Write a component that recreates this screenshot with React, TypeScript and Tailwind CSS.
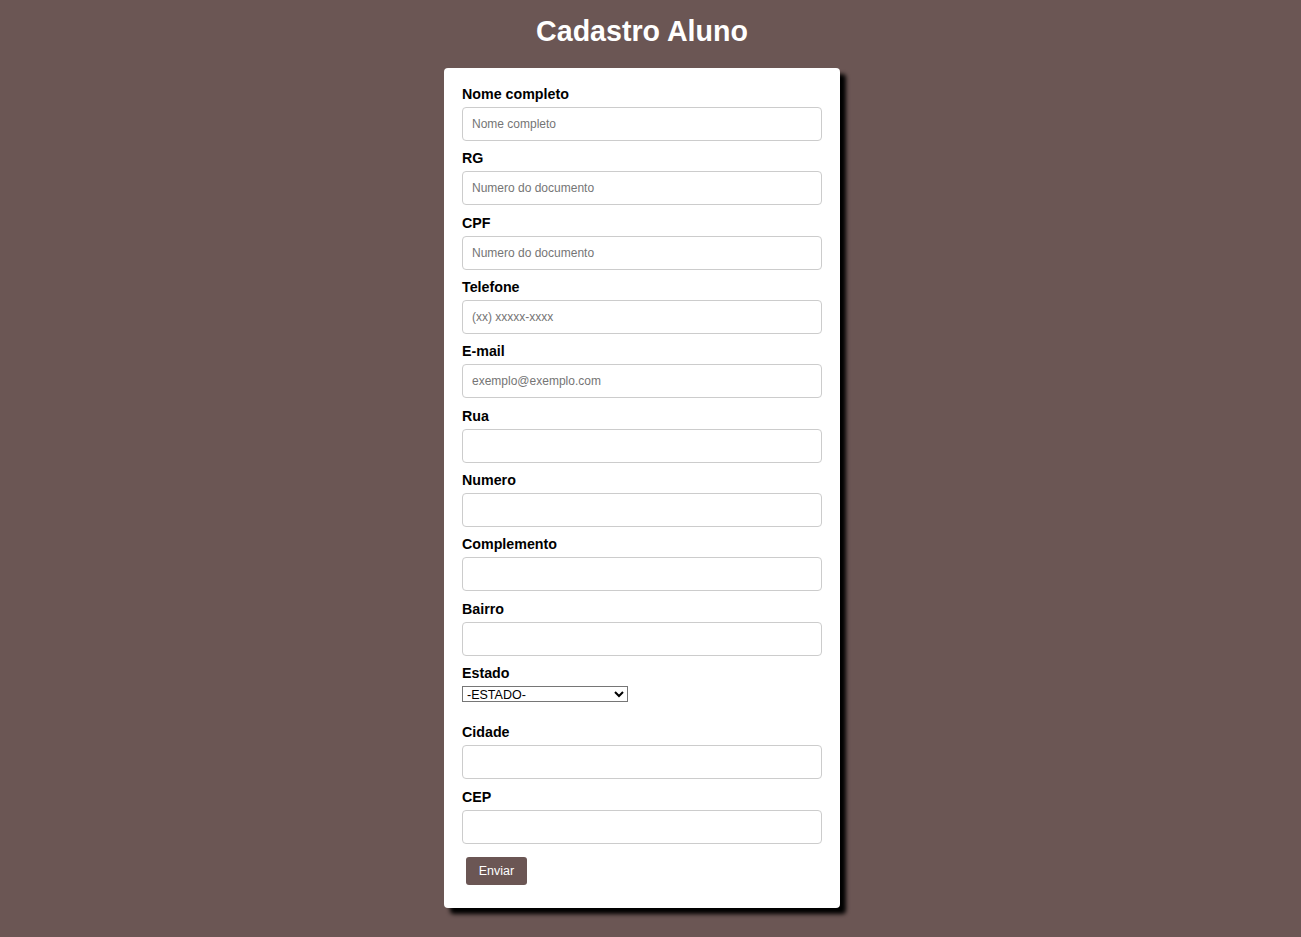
import React from "react";

const fields1 = [
  { label: "Nome completo", ph: "Nome completo" },
  { label: "RG", ph: "Numero do documento" },
  { label: "CPF", ph: "Numero do documento" },
  { label: "Telefone", ph: "(xx) xxxxx-xxxx" },
  { label: "E-mail", ph: "exemplo@exemplo.com" },
  { label: "Rua", ph: "" },
  { label: "Numero", ph: "" },
  { label: "Complemento", ph: "" },
  { label: "Bairro", ph: "" },
];

function Field({ label, ph, first, extra }: { label: string; ph: string; first?: boolean; extra?: boolean }) {
  const cls = first ? "flex flex-col" : extra ? "flex flex-col mt-[10.33px]" : "flex flex-col mt-[9.33px]";
  return (
    <div className={cls}>
      <label className="block h-[16px] leading-[16px] text-[14.25px] font-bold text-black">{label}</label>
      <input
        type="text"
        placeholder={ph}
        className="mt-[5px] h-[34px] w-[360px] rounded-[4px] border border-[#cccccc] bg-white px-[9px] text-[12px] text-black placeholder:text-[#757575] outline-none"
      />
    </div>
  );
}

export default function App() {
  return (
    <div
      className="min-h-[937px] w-full bg-[#6b5654]"
      style={{ fontFamily: '"Liberation Sans", Arial, sans-serif' }}
    >
      <div className="w-[1284px] flex flex-col items-center">
        <h1 className="h-[68px] pt-[14px] text-[28.6px] leading-[34px] font-bold text-white">Cadastro Aluno</h1>
        <div className="w-[396px] rounded-[4px] bg-white p-[18px] pb-[23px] shadow-[6px_6px_4px_#000]">
          {fields1.map((f, i) => (
            <Field key={f.label} label={f.label} ph={f.ph} first={i === 0} />
          ))}
          <div className="mt-[9.33px] flex flex-col">
            <label className="block h-[16px] leading-[16px] text-[14.25px] font-bold text-black">Estado</label>
            <select className="mt-[5px] h-[16px] w-[166px] border border-[#767676] bg-white p-0 text-[12.5px] text-black">
              <option>-ESTADO-</option>
            </select>
          </div>
          <div className="mt-[22px]">
            <Field label="Cidade" ph="" first />
          </div>
          <Field label="CEP" ph="" extra />
          <button className="ml-[4px] mt-[13px] h-[28px] w-[61px] rounded-[3px] bg-[#6b5654] text-[12.5px] text-white">
            Enviar
          </button>
        </div>
      </div>
    </div>
  );
}
